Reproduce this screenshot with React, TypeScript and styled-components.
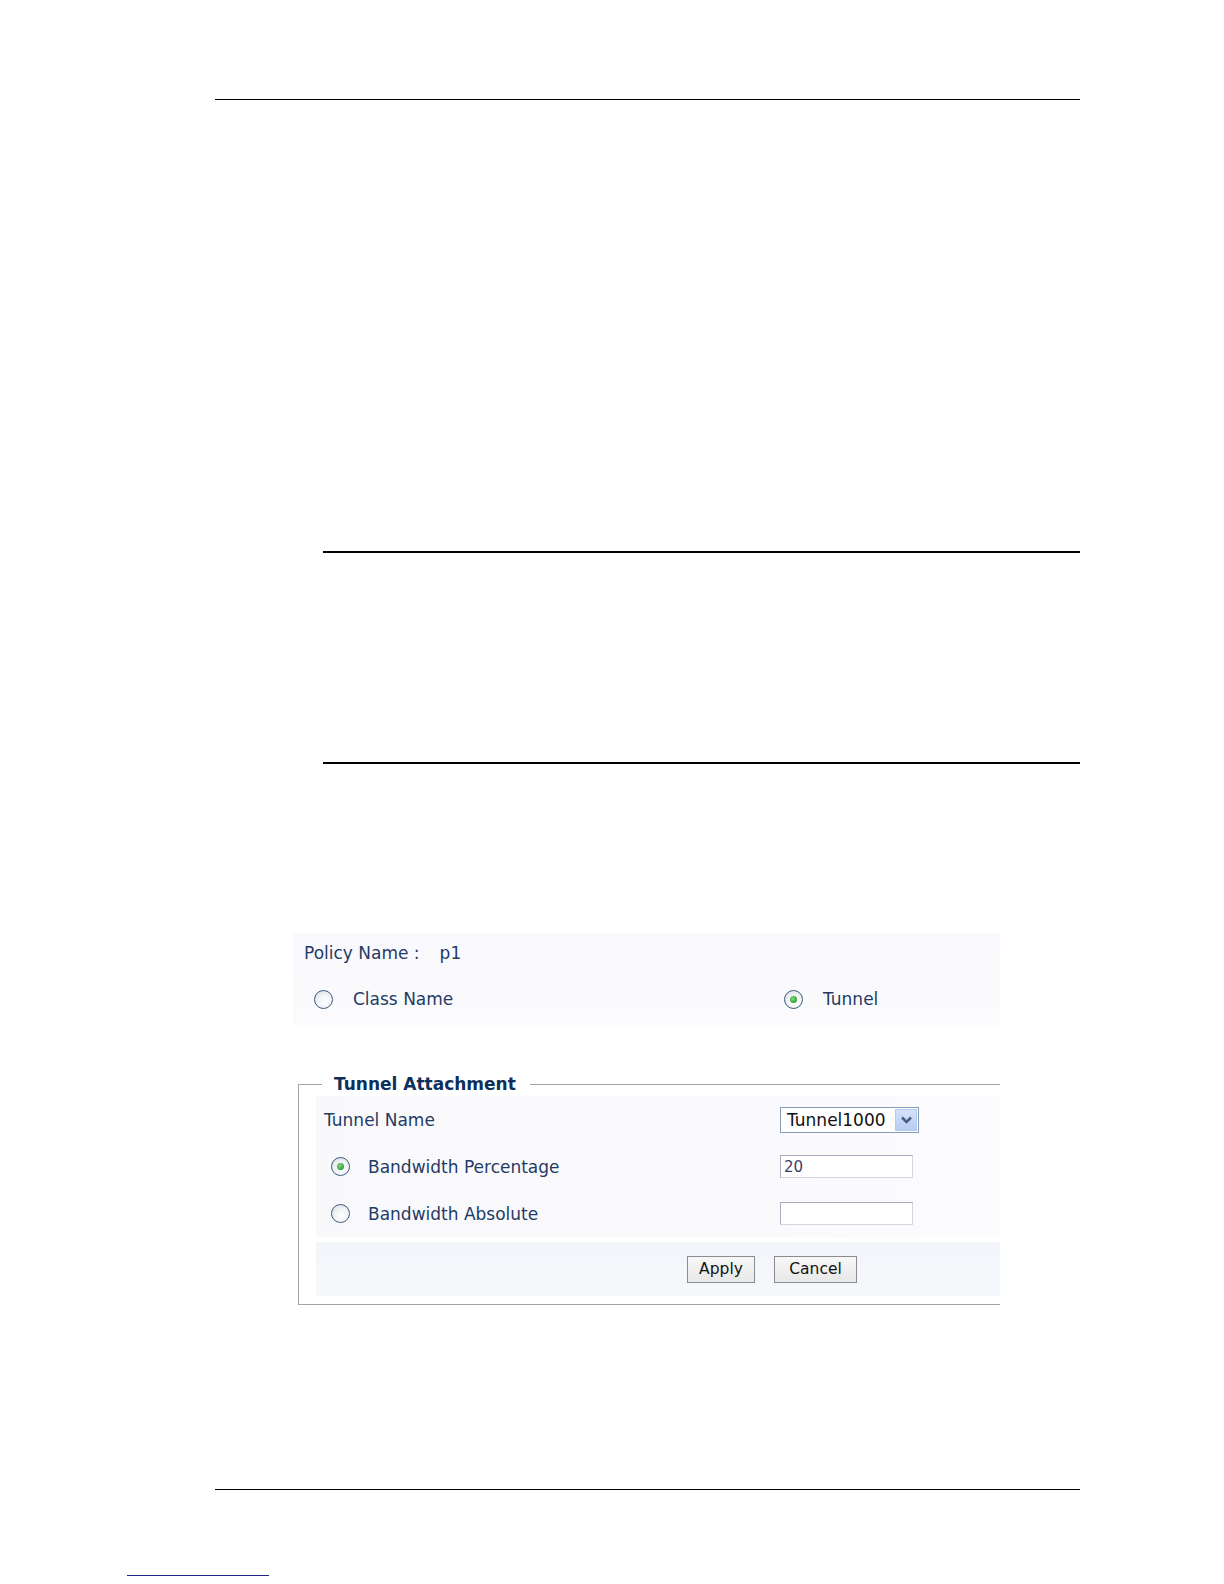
import React from 'react';
import styled, { createGlobalStyle } from 'styled-components';

const GlobalStyle = createGlobalStyle`
  html, body {
    margin: 0;
    padding: 0;
    background: #fff;
  }
  body {
    font-family: 'DejaVu Sans', 'Liberation Sans', sans-serif;
  }
`;

const Page = styled.div`
  width: 1224px;
  height: 1584px;
  display: flex;
  flex-direction: column;
  background: #fff;
  overflow: hidden;
`;

const Rule = styled.div<{ $top: number; $indent: number; $weight: number }>`
  margin-top: ${(p) => p.$top}px;
  margin-left: ${(p) => p.$indent}px;
  width: ${(p) => 1080 - p.$indent}px;
  height: ${(p) => p.$weight}px;
  background: #000;
  flex-shrink: 0;
`;

const LinkLine = styled.div`
  margin-top: 85px;
  margin-left: 127px;
  width: 142px;
  height: 1px;
  background: #22228a;
  box-shadow: 0 -7px 0 -5px rgba(250, 245, 200, 0.5);
`;

const Text = styled.span<{ $bold?: boolean }>`
  font-size: 17px;
  color: ${(p) => (p.$bold ? '#0c2f5c' : '#1f3b66')};
  font-weight: ${(p) => (p.$bold ? 700 : 400)};
  white-space: nowrap;
`;

/* ---------- policy panel ---------- */

const PolicyPanel = styled.div`
  margin-top: 170px;
  margin-left: 293px;
  width: 707px;
  padding-bottom: 7px;
  background: linear-gradient(180deg, #f9f9fd 0%, #fbfbfd 100%);
  display: flex;
  flex-direction: column;
  gap: 8px;
`;

const PolicyRow = styled.div`
  height: 38px;
  display: flex;
  align-items: center;
  padding-left: 11px;
`;

const Value = styled(Text)`
  margin-left: 20px;
`;

const ChoiceRow = styled.div`
  height: 38px;
  display: grid;
  grid-template-columns: 470px 1fr;
  align-items: center;
  padding-left: 21px;
`;

const Choice = styled.label<{ $gap: number }>`
  display: flex;
  align-items: center;
  gap: ${(p) => p.$gap}px;
`;

const Radio = styled.span<{ $checked?: boolean }>`
  position: relative;
  width: 17px;
  height: 17px;
  border-radius: 50%;
  border: 1px solid #3d5b7f;
  background: radial-gradient(circle at 60% 65%, #ffffff 0%, #f2f4f7 45%, #d2d9e2 100%);
  flex-shrink: 0;

  &::after {
    content: '';
    display: ${(p) => (p.$checked ? 'block' : 'none')};
    position: absolute;
    left: 5px;
    top: 5px;
    width: 7px;
    height: 7px;
    border-radius: 50%;
    background: radial-gradient(circle at 40% 40%, #7fe07f 0%, #2f9f34 70%, #1f7a24 100%);
  }
`;

/* ---------- fieldset ---------- */

const Fieldset = styled.fieldset`
  margin: 49px 0 0 298px;
  padding: 0 0 8px 0;
  width: 702px;
  box-sizing: border-box;
  border: 1px solid #a4a4a4;
  border-right: none;
  min-inline-size: 0;
`;

const Legend = styled.legend`
  margin-left: 23px;
  padding: 0 14px 0 12px;
  line-height: 20px;
  font-size: 17px;
  font-weight: 700;
  color: #0c2f5c;
`;

const Inner = styled.div`
  margin-top: 2px;
  margin-left: 17px;
  background: linear-gradient(90deg, #f9f9fc 0%, #fbfbfd 100%);
`;

const FieldRow = styled.div<{ $indent: number }>`
  height: 47px;
  display: grid;
  grid-template-columns: ${(p) => 464 - p.$indent}px 1fr;
  align-items: center;
  padding-left: ${(p) => p.$indent}px;
`;

const Select = styled.div`
  width: 139px;
  height: 26px;
  box-sizing: border-box;
  border: 1px solid #7f9db9;
  background: #fff;
  display: flex;
  align-items: center;
  justify-content: space-between;
  padding: 0 1px 0 6px;
  font-size: 17px;
  color: #111;
`;

const SelectArrow = styled.span`
  width: 22px;
  height: 22px;
  box-sizing: border-box;
  border: 1px solid #b6c8ee;
  background: linear-gradient(180deg, #d5e1f7 0%, #b8cdf2 100%);
  display: flex;
  align-items: center;
  justify-content: center;
`;

const TextBox = styled.div`
  width: 133px;
  height: 23px;
  box-sizing: border-box;
  border: 1px solid #d4d6de;
  border-top-color: #a8acbc;
  border-left-color: #a8acbc;
  background: #fff;
  display: flex;
  align-items: center;
  padding-left: 3px;
  font-size: 15px;
  color: #3a3f66;
`;

const ButtonBand = styled.div`
  margin-top: 5px;
  margin-left: 17px;
  height: 54px;
  display: flex;
  align-items: center;
  gap: 19px;
  padding-left: 371px;
  background: linear-gradient(180deg, #f2f6fa 0%, #f5f8fb 100%);
`;

const Button = styled.button<{ $width: number }>`
  width: ${(p) => p.$width}px;
  height: 27px;
  box-sizing: border-box;
  border: 1px solid #8c8c8c;
  background: linear-gradient(180deg, #f8f8f8 0%, #e7e7e7 100%);
  font-family: 'DejaVu Sans', sans-serif;
  font-size: 15.5px;
  color: #111;
  padding: 0;
`;

const Chevron = () => (
  <svg width="13" height="10" viewBox="0 0 13 10">
    <path d="M2 2.5 L6.5 7 L11 2.5" fill="none" stroke="#4a5f88" strokeWidth="2.6" />
  </svg>
);

export default function App() {
  return (
    <Page>
      <GlobalStyle />
      <Rule $top={99} $indent={215} $weight={1} />
      <Rule $top={451} $indent={323} $weight={2} />
      <Rule $top={209} $indent={323} $weight={2} />

      <PolicyPanel>
        <PolicyRow>
          <Text>Policy Name :</Text>
          <Value>p1</Value>
        </PolicyRow>
        <ChoiceRow>
          <Choice $gap={20}>
            <Radio />
            <Text>Class Name</Text>
          </Choice>
          <Choice $gap={20}>
            <Radio $checked />
            <Text>Tunnel</Text>
          </Choice>
        </ChoiceRow>
      </PolicyPanel>

      <Fieldset>
        <Legend>Tunnel Attachment</Legend>
        <Inner>
          <FieldRow $indent={8}>
            <Text>Tunnel Name</Text>
            <Select>
              <span>Tunnel1000</span>
              <SelectArrow>
                <Chevron />
              </SelectArrow>
            </Select>
          </FieldRow>
          <FieldRow $indent={15}>
            <Choice $gap={18}>
              <Radio $checked />
              <Text>Bandwidth Percentage</Text>
            </Choice>
            <TextBox>20</TextBox>
          </FieldRow>
          <FieldRow $indent={15}>
            <Choice $gap={18}>
              <Radio />
              <Text>Bandwidth Absolute</Text>
            </Choice>
            <TextBox />
          </FieldRow>
        </Inner>
        <ButtonBand>
          <Button $width={68}>Apply</Button>
          <Button $width={83}>Cancel</Button>
        </ButtonBand>
      </Fieldset>

      <Rule $top={184} $indent={215} $weight={1} />
      <LinkLine />
    </Page>
  );
}
